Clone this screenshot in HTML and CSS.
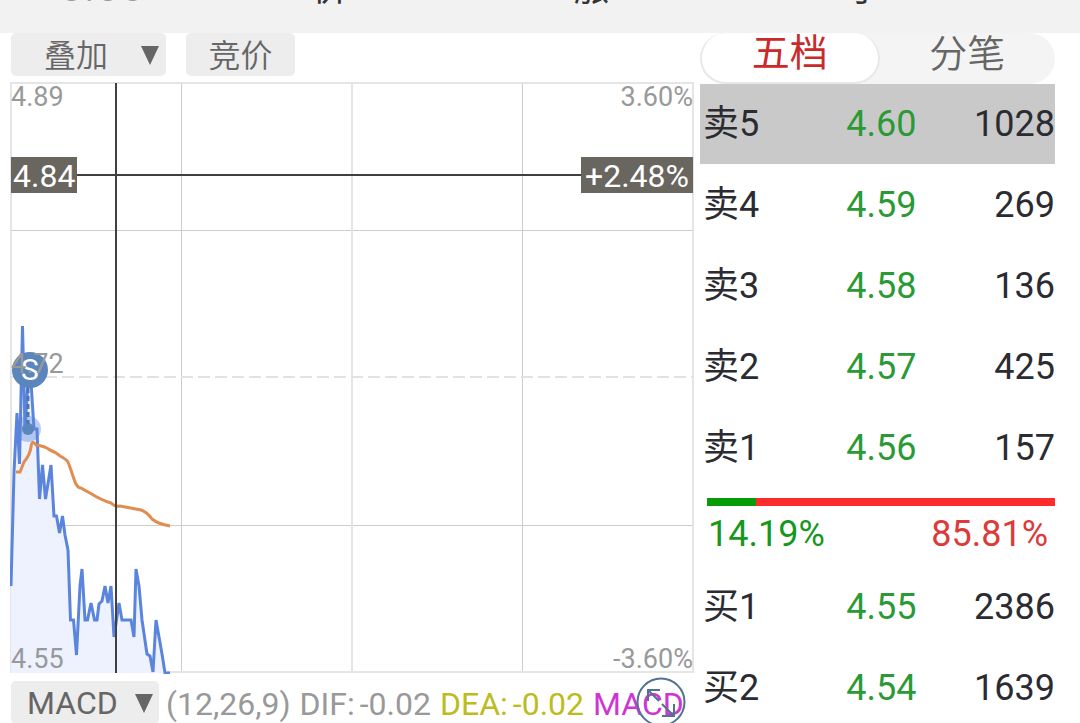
FILE: index.html
```html
<!DOCTYPE html>
<html lang="zh-CN">
<head>
<meta charset="utf-8">
<meta name="viewport" content="width=device-width, initial-scale=1">
<title>分时</title>
<link rel="stylesheet" href="styles.css">
</head>
<body>
<header class="quote-bar">
  <span class="quote-value">0.00</span>
  <span>价</span>
  <span>涨</span>
  <span>手</span>
</header>
<main class="layout">
  <section class="chart-pane">
    <div class="toolbar">
      <button class="chip chip-overlay" type="button"><span>叠加</span><svg class="caret" viewBox="0 0 20 20" aria-hidden="true"><path d="M1 1H19L10 20Z"/></svg></button>
      <button class="chip chip-auction" type="button"><span>竞价</span></button>
    </div>
    <div class="chart">
      <svg class="plot" viewBox="0 0 684 592" preserveAspectRatio="none" aria-hidden="true">
        <path class="grid" d="M171.500 1V591M512.500 1V591M1 148.500H683M1 443.500H683"/>
        <path class="grid-soft" d="M342 1V591"/>
        <rect class="frame" x="1" y="1" width="682" height="589"/>
        <path class="mid" d="M1 295H683"/>
        <path class="area" d="M1 504L4 390L7 331L9.500 382L12.500 244L16 347L19 304L22 300L24 347H27L29.500 417L32.500 383L35.500 417L41 383L44 434H46.500L49.500 451L52.500 434L55 453L58 468L60.500 538H63.500L66.500 573L70 504L72 487L75 538H77.500L81 521L84.500 538H87L89 522L92 519L95 504L98 521L101 504L104 555L109 521L112 538H121L124 555L127 487L130 504L133 538L137 572L140 574L144 591L146 538L152 572L155 591H1Z"/>
        <path class="price" d="M1 504L4 390L7 331L9.500 382L12.500 244L15 347L18 300L21 300L24 347H27L29.500 417L32.500 383L35.500 417L41 383L44 434H46.500L49.500 451L52.500 434L55 453L58 468L60.500 538H63.500L66.500 573L70 504L72 487L75 538H77.500L81 521L84.500 538H87L89 522L92 519L95 504L98 521L101 504L104 555L109 521L112 538H121L124 555L126 487L129 504L132 538L137 572L140 574L143 590L146 538L152 572L155 591H160"/>
        <path class="average" d="M6 390H10L14 380Q20 373 21 365T26 363Q35 364 40 368Q47 371 50 374Q56 377 58 380C64 395 65 406 71 406Q76 409 80 411Q91 418 101 421Q105 425 110 424L131 428Q137 430 142 437Q148 442 160 444"/>
        <path class="cross" d="M106 1V591M1 93H683"/>
      </svg>
      <span class="axis top-left">4.89</span>
      <span class="axis top-right">3.60%</span>
      <span class="axis bottom-left">4.55</span>
      <span class="axis bottom-right">-3.60%</span>
      <svg class="marker" viewBox="0 0 36 92" aria-hidden="true"><circle class="halo" cx="16" cy="77" r="13"/><circle class="dot" cx="16" cy="77" r="6"/><path class="stem" d="M16 36V72"/><circle class="dot" cx="18" cy="18" r="18"/></svg>
      <span class="marker-label">S</span>
      <span class="axis middle-left">4.72</span>
      <span class="cross-tag tag-price">4.84</span>
      <span class="cross-tag tag-change">+2.48%</span>
    </div>
    <div class="indicator">
      <button class="chip chip-macd" type="button"><span>MACD</span><svg class="caret" viewBox="0 0 20 20" aria-hidden="true"><path d="M1 1H19L10 20Z"/></svg></button>
      <span class="indicator-text"><span>(12,26,9)</span><span class="pair"><span>DIF:</span><span>-0.02</span></span><span class="pair dea"><span>DEA:</span><span>-0.02</span></span><span class="macd">MACD</span></span>
      <button class="expand" type="button" aria-label="全屏"><svg viewBox="0 0 50 50" aria-hidden="true"><circle cx="25" cy="25" r="23.500"/><path d="M12 24V13H24M12 13L23 24M26 27L38 39M38 27V39H26"/></svg></button>
    </div>
  </section>
  <aside class="book">
    <div class="tabs">
      <button class="tab tab-active" type="button">五档</button>
      <button class="tab" type="button">分笔</button>
    </div>
    <table class="levels">
      <tr class="selected"><th scope="row">卖5</th><td class="px">4.60</td><td>1028</td></tr>
      <tr><th scope="row">卖4</th><td class="px">4.59</td><td>269</td></tr>
      <tr><th scope="row">卖3</th><td class="px">4.58</td><td>136</td></tr>
      <tr><th scope="row">卖2</th><td class="px">4.57</td><td>425</td></tr>
      <tr><th scope="row">卖1</th><td class="px">4.56</td><td>157</td></tr>
    </table>
    <div class="ratio"><div class="ratio-buy" style="width:14.19%"></div></div>
    <div class="ratio-text"><span class="buy">14.19%</span><span class="sell">85.81%</span></div>
    <table class="levels">
      <tr><th scope="row">买1</th><td class="px">4.55</td><td>2386</td></tr>
      <tr><th scope="row">买2</th><td class="px">4.54</td><td>1639</td></tr>
    </table>
  </aside>
</main>
</body>
</html>
```
FILE: styles.css
```css
* { box-sizing: border-box; }
body {
  margin: 0;
  background: #fff;
  color: #2b2c32;
  font-family: Roboto, "Noto Sans CJK SC", sans-serif;
  overflow: hidden;
}
button {
  border: 0;
  padding: 0;
  font: inherit;
  color: inherit;
}
.quote-bar {
  display: grid;
  grid-template-columns: 253px 261px 274px 1fr;
  padding-left: 59px;
  height: 33px;
  background: #f2f2f2;
  color: #333;
  font-size: 36px;
  line-height: 36px;
  overflow: hidden;
}
.quote-bar span { margin-top: -29px; }
.quote-bar .quote-value {
  margin-top: -32px;
  color: #999;
  font-size: 44px;
}
.layout {
  display: grid;
  grid-template-columns: minmax(0, 684fr) minmax(0, 355fr);
  column-gap: 6px;
  padding: 0 25px 0 10px;
}
.toolbar { display: flex; gap: 20px; padding-left: 1px; }
.chip {
  display: flex;
  align-items: center;
  height: 43px;
  background: #ededed;
  border-radius: 5px;
  color: #666;
  font-size: 32px;
  line-height: 43px;
}
.caret { width: 20px; height: 20px; fill: #666; }
.chip-overlay { width: 155px; padding-left: 33px; gap: 32px; font-weight: 350; }
.chip-auction { width: 109px; justify-content: center; font-weight: 350; }
.toolbar .chip span { padding-top: 4px; }
.chart { position: relative; margin-top: 7px; }
.plot { display: block; width: 100%; height: 592px; margin-top: -1px; }
.grid, .grid-soft, .frame, .mid { fill: none; stroke: #ccc; }
.grid-soft, .frame { stroke: #e5e5e5; stroke-width: 2; }
.mid { stroke: #e2e2e2; stroke-width: 2; stroke-dasharray: 12 5; }
.area { fill: #edf2fe; }
.price { fill: none; stroke: #5b85dc; stroke-width: 3; }
.average { fill: none; stroke: #e18d51; stroke-width: 3; }
.cross { fill: none; stroke: #404040; stroke-width: 2; }
.axis { position: absolute; color: #999; font-size: 27px; line-height: 30px; }
.top-left { left: 1px; top: 0; }
.top-right { right: 1px; top: 0; }
.bottom-left { left: 1px; bottom: 0; }
.bottom-right { right: 1px; bottom: 0; }
.middle-left { left: 1px; top: 267px; }
.cross-tag {
  position: absolute;
  top: 75px;
  height: 36px;
  padding: 0 2px;
  background: #68665f;
  color: #fff;
  font-size: 32px;
  line-height: 38px;
}
.tag-price { left: 1px; }
.tag-change { right: 1px; padding: 0 4px; }
.marker { position: absolute; left: 2px; top: 270px; width: 36px; height: 92px; }
.dot { fill: #5b85bd; }
.halo { fill: #5b85dc; opacity: .4; }
.stem { stroke: #4a76b0; stroke-width: 3; stroke-dasharray: 5 3; }
.marker-label {
  position: absolute;
  left: 2px;
  top: 270px;
  width: 36px;
  color: #fff;
  font-size: 30px;
  line-height: 36px;
  text-align: center;
}
.indicator {
  position: relative;
  display: flex;
  gap: 7px;
  margin-top: 7px;
  padding-left: 1px;
  font-size: 32px;
  line-height: 46px;
  white-space: nowrap;
}
.chip-macd { flex: none; width: 148px; padding-left: 16px; gap: 16px; }
.chip-macd span { padding-top: 2px; }
.indicator-text { display: flex; gap: 9px; color: #999; }
.pair { display: flex; gap: 5px; }
.indicator-text .dea { color: #bdbc1e; }
.macd { color: #cf35d5; }
.expand {
  position: absolute;
  right: 8px;
  top: -4px;
  width: 50px;
  height: 50px;
  background: none;
}
.expand svg { display: block; fill: none; stroke: #54728f; stroke-width: 2; }
.tabs {
  display: flex;
  height: 51px;
  background: #f4f4f4;
  border-radius: 26px;
}
.tab {
  flex: 1;
  padding-bottom: 10px;
  background: none;
  color: #666;
  font-size: 38px;
  font-weight: 350;
  line-height: 40px;
}
.tab-active {
  background: #fff;
  color: #cb2a2a;
  border: 2px solid #e8e8e8;
  border-top: 0;
  border-radius: 26px;
  font-weight: 400;
}
.levels {
  width: 100%;
  border-collapse: collapse;
  table-layout: fixed;
  font-size: 36px;
  line-height: 42px;
}
.levels tr { height: 81px; }
.levels .selected { height: 80px; background: #c9c9c9; }
.levels th { width: 38%; padding: 0 0 0 3px; font-weight: 400; text-align: left; }
.levels td { padding: 0; text-align: right; }
.levels .px { width: 23%; color: #299a35; }
.ratio { height: 8px; margin: 10px 0 0 7px; background: #fc2c2c; }
.ratio-buy { height: 8px; background: #069c06; }
.ratio-text {
  display: flex;
  justify-content: space-between;
  padding: 7px 7px 11px 8px;
  font-size: 36px;
  line-height: 42px;
}
.buy { color: #16981c; }
.sell { color: #dd3a3a; }
```
